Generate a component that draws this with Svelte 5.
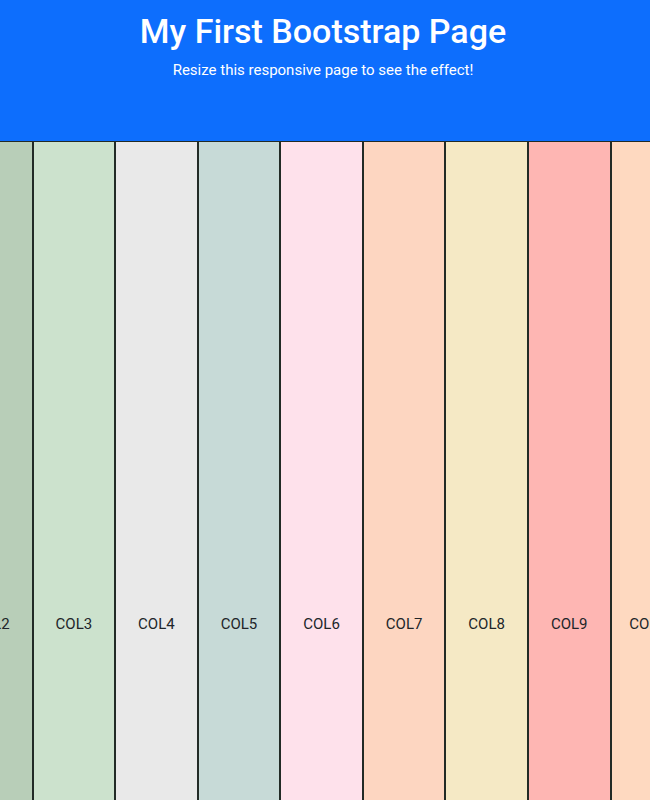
<script>
  const columns = [
    { name: 'COL2', color: '#b8ceb8' },
    { name: 'COL3', color: '#cce2cd' },
    { name: 'COL4', color: '#e9e9e9' },
    { name: 'COL5', color: '#c7dad7' },
    { name: 'COL6', color: '#fee1eb' },
    { name: 'COL7', color: '#fdd6c1' },
    { name: 'COL8', color: '#f5e9c5' },
    { name: 'COL9', color: '#feb6b3' },
    { name: 'COL10', color: '#fed9c0' }
  ];
</script>

<div class="page">
  <header>
    <h1>My First Bootstrap Page</h1>
    <p>Resize this responsive page to see the effect!</p>
  </header>
  <main>
    <div class="row">
      {#each columns as column (column.name)}
        <div class="col" style:background-color={column.color}>{column.name}</div>
      {/each}
    </div>
  </main>
</div>

<style>
  :global(body) {
    margin: 0;
  }

  .page {
    display: flex;
    flex-direction: column;
    min-height: 100vh;
    overflow: hidden;
    font-family: Roboto, 'Liberation Sans', sans-serif;
    color: #212529;
  }

  header {
    padding: 11px 4px 60px 0;
    background: #0d6efd;
    color: #fff;
    text-align: center;
  }

  h1 {
    margin: 0 0 8px;
    font-size: 34px;
    font-weight: 500;
    line-height: 41px;
  }

  p {
    margin: 0;
    font-size: 15px;
    line-height: 21px;
  }

  main {
    display: flex;
    flex: 1;
  }

  .row {
    display: flex;
    flex: none;
    width: 743px;
    margin-left: -50px;
  }

  .col {
    box-sizing: border-box;
    flex: 1 0 0;
    padding-top: 472px;
    border: 1px solid #222b26;
    border-bottom: 0;
    font-size: 15px;
    line-height: 21px;
    text-align: center;
  }
</style>
